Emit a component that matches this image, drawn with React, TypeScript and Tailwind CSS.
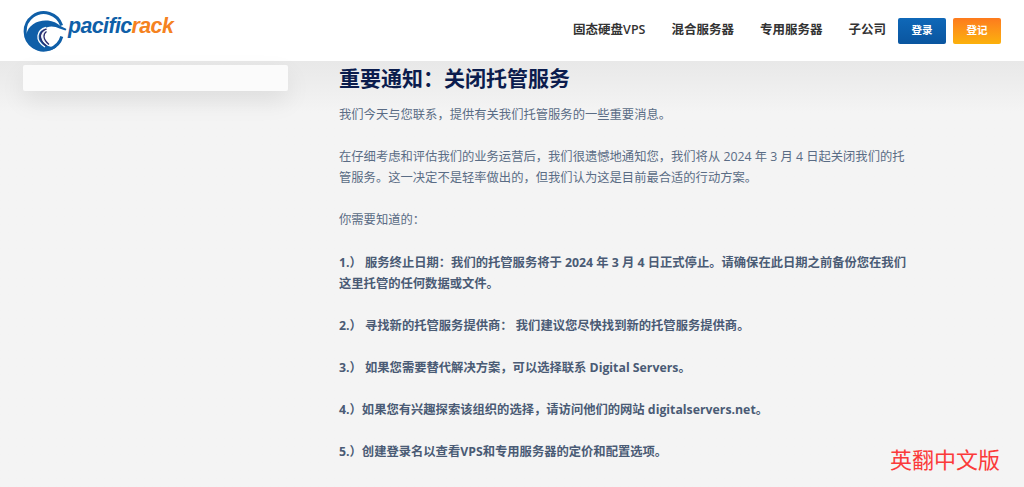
const cjk = "font-['Open_Sans','Noto_Sans_CJK_SC',sans-serif]";

const NavLink = ({ label }: { label: string }) => (
  <a className="text-[12.5px] font-semibold text-[#333] whitespace-nowrap">{label}</a>
);

const Logo = () => (
  <div className="flex items-center">
    <svg width="44" height="42" viewBox="0 0 44 42" className="shrink-0">
      {/* outer ring, open on the right where the crest leaves it */}
      <path d="M38.600 15.500A18.700 18.700 0 1 0 38.800 26.500" fill="none" stroke="#0f5fa8" strokeWidth="3" />
      {/* wave body */}
      <path
        d="M3.500 24C5 15 15 9.500 25 10.500c5 .5 9 2.500 12.500 5.500l6 3-1 1.500-6-2c-5-2.500-12-3-16 1-4.500 4.500-2.500 12 3 15.500 3.500 2.200 7 2.500 10.500 1.500-4 4-10 5.500-16 4C7 39 2.500 32 3.500 24z"
        fill="#0f5fa8"
      />
      <path d="M23 17.500C14 20 11 30 22 37" fill="none" stroke="#fff" strokeWidth="1.300" />
      <path d="M23.500 19C16.500 21.500 14 29 23.500 36" fill="none" stroke="#2a2c6e" strokeWidth="1.400" />
      <path d="M23 20.500C18.500 23 17 29 24.500 34.800" fill="none" stroke="#e8eef6" strokeWidth="1" />
      <path d="M23.500 21.500C20 24 19.500 29 26 34.500" fill="none" stroke="#2a2c6e" strokeWidth="1.300" />
    </svg>
    <span className="ml-[1px] mt-[-8px] font-['Liberation_Sans',sans-serif] text-[21.400px] font-bold italic leading-none tracking-[-0.6px] text-[#0f5fa8]">
      pacific<span className="text-[#f58220]">rack</span>
    </span>
  </div>
);

const paragraphs = [
  { text: "我们今天与您联系，提供有关我们托管服务的一些重要消息。" },
  {
    text: "在仔细考虑和评估我们的业务运营后，我们很遗憾地通知您，我们将从 2024 年 3 月 4 日起关闭我们的托管服务。这一决定不是轻率做出的，但我们认为这是目前最合适的行动方案。",
  },
  { text: "你需要知道的：" },
  {
    text: "1.） 服务终止日期：我们的托管服务将于 2024 年 3 月 4 日正式停止。请确保在此日期之前备份您在我们这里托管的任何数据或文件。",
    bold: true,
  },
  { text: "2.） 寻找新的托管服务提供商： 我们建议您尽快找到新的托管服务提供商。", bold: true },
  { text: "3.） 如果您需要替代解决方案，可以选择联系 Digital Servers。", bold: true },
  { text: "4.）如果您有兴趣探索该组织的选择，请访问他们的网站 digitalservers.net。", bold: true },
  { text: "5.）创建登录名以查看VPS和专用服务器的定价和配置选项。", bold: true },
];

export default function App() {
  return (
    <div className={`relative h-[487px] overflow-hidden bg-[#f4f4f4] ${cjk}`}>
      <header className="flex h-[61px] items-center justify-between bg-white pl-[23px] pr-[23px]">
        <Logo />
        <nav className="flex items-center">
          <div className="flex items-center gap-[26px]">
            <NavLink label="固态硬盘VPS" />
            <NavLink label="混合服务器" />
            <NavLink label="专用服务器" />
            <NavLink label="子公司" />
          </div>
          <div className="ml-[12px] flex items-center gap-[7px]">
            <button className="h-[26px] w-[48px] rounded-[2px] bg-gradient-to-b from-[#0f68b8] to-[#0a559f] text-[10.500px] font-semibold text-white">
              登录
            </button>
            <button className="h-[26px] w-[48px] rounded-[2px] bg-gradient-to-b from-[#fd7a1d] to-[#fbb10a] text-[10.500px] font-semibold text-white">
              登记
            </button>
          </div>
        </nav>
      </header>

      <main className="flex h-[426px] items-start bg-gradient-to-b from-[#e8e8e8] to-[#f4f4f4] to-[12%] pl-[23px]">
        <aside className="mt-[4px] h-[26px] w-[265px] shrink-0 rounded-[2px] bg-[#fbfbfb] shadow-[0_10px_24px_rgba(0,0,0,0.08)]" />
        <article className="ml-[51px] w-[570px]">
          <h1 className="mt-[1px] text-[21px] font-bold leading-[32px] text-[#0b1c4d]">
            重要通知：关闭托管服务
          </h1>
          <div className="mt-[10px] flex flex-col gap-[21.100px] text-[12.300px] leading-[21.060px] text-[#5a6c85]">
            {paragraphs.map((p) => (
              <p key={p.text} className={p.bold ? "font-bold text-[#4a5b75]" : ""}>
                {p.text}
              </p>
            ))}
          </div>
        </article>
      </main>

      <div className="absolute left-[890px] top-[444px] text-[22px] leading-[30px] text-[#fb3a3a]">英翻中文版</div>
    </div>
  );
}
